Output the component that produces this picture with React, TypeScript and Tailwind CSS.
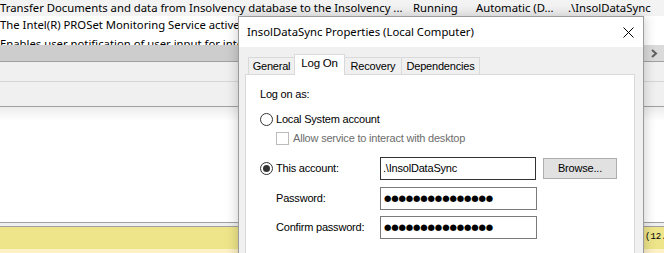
import React from "react";

const seg = { fontFamily: '"Noto Sans", "Open Sans", sans-serif' };
const ms = { fontFamily: '"Liberation Sans", Arial, sans-serif', letterSpacing: "-0.2px" };

function Radio({ checked }: { checked?: boolean }) {
  return (
    <div className="w-[13px] h-[13px] rounded-full border border-[#333333] bg-white flex items-center justify-center shrink-0">
      {checked && <div className="w-[7px] h-[7px] rounded-full bg-[#333333]" />}
    </div>
  );
}

function Tab({ label, selected, w }: { label: string; selected?: boolean; w: string }) {
  if (selected) {
    return (
      <div
        className={`${w} h-[21px] -mb-px -ml-px bg-white border border-b-0 border-[#d9d9d9] relative z-10 flex items-center justify-center text-[11.5px] text-black pb-[2px]`}
      >
        {label}
      </div>
    );
  }
  return (
    <div
      className={`${w} h-[17px] -ml-px bg-[#f0f0f0] border border-b-0 border-[#d9d9d9] flex items-center justify-center text-[11px] text-black`}
    >
      {label}
    </div>
  );
}

function Dots() {
  return (
    <span
      className="text-[8.5px] tracking-[-0.15px] text-black"
      style={{ fontFamily: '"DejaVu Sans", sans-serif' }}
    >
      ●●●●●●●●●●●●●●●
    </span>
  );
}

export default function App() {
  return (
    <div className="relative w-[664px] h-[253px] overflow-hidden bg-white" style={seg}>
      {/* Background services window */}
      <div className="flex flex-col w-full">
        <div className="h-[45px] overflow-hidden">
          <div className="-mt-[3px] text-[11.3px] text-black">
            <div className="h-[19px] bg-[#f3f3f3] flex items-center whitespace-nowrap pt-[3px]">
              <div className="w-[413px] shrink-0 overflow-hidden">Transfer Documents and data from Insolvency database to the Insolvency ...</div>
              <div className="w-[63px] shrink-0">Running</div>
              <div className="w-[92px] shrink-0">Automatic (D...</div>
              <div className="shrink-0">.\InsolDataSync</div>
            </div>
            <div className="h-[19px] bg-white flex items-center whitespace-nowrap">
              <div>The Intel(R) PROSet Monitoring Service actively monitors the network adapters</div>
            </div>
            <div className="h-[19px] bg-white flex items-center whitespace-nowrap">
              <div>Enables user notification of user input for interactive services</div>
            </div>
          </div>
        </div>
        <div className="h-[16px] flex">
          <div className="flex-1 bg-[#cdcdcd]" />
          <div className="w-[21px] bg-[#dadada] flex items-center justify-center">
            <svg width="8" height="9" viewBox="0 0 8 9">
              <path d="M2 1 L6 4.5 L2 8" fill="none" stroke="#606060" strokeWidth="2" />
            </svg>
          </div>
        </div>
        <div className="h-px bg-[#a0a0a0]" />
        <div className="h-[20px] bg-[#f0f0f0] border-b border-[#d6d6d6]" />
        <div className="h-[24px] bg-[#f0f0f0]" />
        <div className="h-px bg-[#a0a0a0]" />
        <div className="h-[115px] bg-gradient-to-b from-[#ececec] via-white via-[12%] to-white" />
        <div className="h-px bg-[#a0a0a0]" />
        <div className="h-[3px] bg-[#f0f0f0]" />
        <div className="h-px bg-[#a0a0a0]" />
        <div className="h-[22px] bg-[#eee58a] flex items-center overflow-hidden">
          <div className="w-[645px] shrink-0" />
          <div className="text-[9px] text-black whitespace-nowrap" style={{ fontFamily: '"Liberation Mono", monospace' }}>
            (12.
          </div>
        </div>
        <div className="h-[10px] bg-[#fdf1c6]" />
      </div>

      {/* Dialog */}
      <div className="absolute left-[238px] top-[16px] w-[406px] h-[250px] bg-[#f0f0f0] border border-[#9c9c9c] shadow-[0_0_12px_rgba(0,0,0,0.22)] flex flex-col">
        <div className="h-[30px] bg-white flex items-center justify-between pl-[8px] pr-[9px] shrink-0">
          <div className="text-[11.3px] text-black" style={seg}>
            InsolDataSync Properties (Local Computer)
          </div>
          <svg width="11" height="11" viewBox="0 0 11 11">
            <path d="M0.5 0.5 L10.5 10.5 M10.5 0.5 L0.5 10.5" stroke="#000" strokeWidth="1" />
          </svg>
        </div>
        <div className="flex-1 pl-[6px] pr-[8px] pt-[7px] flex flex-col" style={ms}>
          <div className="flex items-end h-[20px] pl-[4px]">
            <Tab label="General" w="w-[47px]" />
            <Tab label="Log On" selected w="w-[51px]" />
            <Tab label="Recovery" w="w-[58px]" />
            <Tab label="Dependencies" w="w-[79px]" />
          </div>
          <div className="flex-1 bg-white border border-[#d9d9d9] pl-[14px] pt-[12px] text-[11px] text-black">
            <div className="h-[14px] flex items-center">Log on as:</div>
            <div className="h-[14px] mt-[11px] flex items-center gap-[3px]">
              <Radio />
              <span>Local System account</span>
            </div>
            <div className="h-[14px] mt-[5px] pl-[16px] flex items-center gap-[4px]">
              <div className="w-[13px] h-[13px] border border-[#bcbcbc] bg-white" />
              <span className="text-[#6d6d6d]">Allow service to interact with desktop</span>
            </div>
            <div className="h-[23px] mt-[12px] flex items-center">
              <div className="w-[120px] flex items-center gap-[3px]">
                <Radio checked />
                <span>This account:</span>
              </div>
              <div className="w-[156px] h-[23px] border border-[#333333] bg-white flex items-center pl-[2px]">
                .\InsolDataSync
              </div>
              <div className="ml-[7px] w-[74px] h-[21px] bg-[#e1e1e1] border border-[#adadad] flex items-center justify-center">
                Browse...
              </div>
            </div>
            <div className="h-[23px] mt-[7px] flex items-center">
              <div className="w-[120px] pl-[16px]">Password:</div>
              <div className="w-[157px] h-[23px] border border-[#7a7a7a] bg-white flex items-center pl-[3px]">
                <Dots />
              </div>
            </div>
            <div className="h-[23px] mt-[6px] flex items-center">
              <div className="w-[120px] pl-[16px]">Confirm password:</div>
              <div className="w-[157px] h-[23px] border border-[#7a7a7a] bg-white flex items-center pl-[3px]">
                <Dots />
              </div>
            </div>
          </div>
        </div>
      </div>
    </div>
  );
}
